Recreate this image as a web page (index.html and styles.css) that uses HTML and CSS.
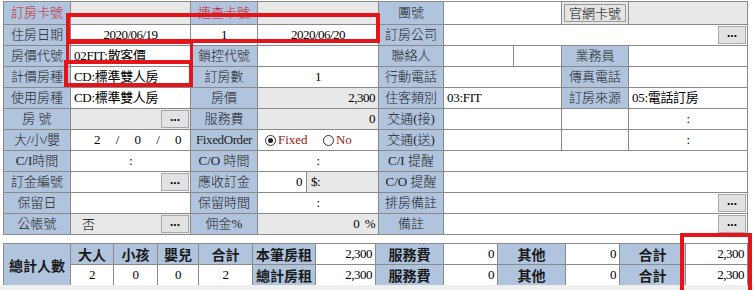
FILE: index.html
```html
<!DOCTYPE html>
<html lang="zh-Hant">
<head>
    <meta charset="UTF-8">
    <title>訂房資料</title>
    <link rel="stylesheet" href="styles.css">
</head>
<body>
<div class="page">
    <table class="grid main">
        <colgroup>
            <col style="width:67px"><col style="width:120px"><col style="width:67px"><col style="width:121px">
            <col style="width:65px"><col style="width:118px"><col style="width:67px"><col style="width:119px">
        </colgroup>
        <tr>
            <td class="lbl red">訂房卡號</td>
            <td class="gray"></td>
            <td class="lbl red">連查卡號</td>
            <td class="gray"></td>
            <td class="lbl">團號</td>
            <td></td>
            <td class="web"><span class="webbtn">官網卡號</span></td>
            <td class="gray"></td>
        </tr>
        <tr>
            <td class="lbl">住房日期</td>
            <td class="c num">2020/06/19</td>
            <td class="c num">1</td>
            <td class="c num">2020/06/20</td>
            <td class="lbl">訂房公司</td>
            <td colspan="3"><div class="withbtn"><span></span><span class="dots">...</span></div></td>
        </tr>
        <tr>
            <td class="lbl">房價代號</td>
            <td class="val">02FIT:散客價</td>
            <td class="lbl">鎖控代號</td>
            <td></td>
            <td class="lbl">聯絡人</td>
            <td class="split"><div class="parts"><span class="part first"></span><span class="part"></span></div></td>
            <td class="lbl">業務員</td>
            <td></td>
        </tr>
        <tr>
            <td class="lbl">計價房種</td>
            <td class="val">CD:標準雙人房</td>
            <td class="lbl">訂房數</td>
            <td class="c num">1</td>
            <td class="lbl">行動電話</td>
            <td></td>
            <td class="lbl">傳真電話</td>
            <td></td>
        </tr>
        <tr>
            <td class="lbl">使用房種</td>
            <td class="val">CD:標準雙人房</td>
            <td class="lbl">房價</td>
            <td class="gray r num">2,300</td>
            <td class="lbl">住客類別</td>
            <td class="val">03:FIT</td>
            <td class="lbl">訂房來源</td>
            <td class="val">05:電話訂房</td>
        </tr>
        <tr>
            <td class="lbl">房 號</td>
            <td class="gray"><div class="withbtn"><span></span><span class="dots">...</span></div></td>
            <td class="lbl">服務費</td>
            <td class="gray r num">0</td>
            <td class="lbl">交通(接)</td>
            <td></td>
            <td></td>
            <td class="c num">:</td>
        </tr>
        <tr>
            <td class="lbl">大/小/嬰</td>
            <td class="num"><div class="guests"><span>2</span><span>/</span><span>0</span><span>/</span><span>0</span></div></td>
            <td class="lbl num">FixedOrder</td>
            <td class="radios">
                <span class="radio on"></span><span class="rtext">Fixed</span>
                <span class="radio"></span><span class="rtext">No</span>
            </td>
            <td class="lbl">交通(送)</td>
            <td></td>
            <td></td>
            <td class="c num">:</td>
        </tr>
        <tr>
            <td class="lbl">C/I時間</td>
            <td class="c num">:</td>
            <td class="lbl">C/O 時間</td>
            <td class="c num">:</td>
            <td class="lbl">C/I 提醒</td>
            <td colspan="3"></td>
        </tr>
        <tr>
            <td class="lbl">訂金編號</td>
            <td><div class="withbtn"><span></span><span class="dots">...</span></div></td>
            <td class="lbl">應收訂金</td>
            <td class="split"><div class="parts"><span class="part deposit num">0</span><span class="part gray num">$:</span></div></td>
            <td class="lbl">C/O 提醒</td>
            <td colspan="3"></td>
        </tr>
        <tr>
            <td class="lbl">保留日</td>
            <td></td>
            <td class="lbl">保留時間</td>
            <td class="c num">:</td>
            <td class="lbl">排房備註</td>
            <td colspan="3"><div class="withbtn"><span></span><span class="dots">...</span></div></td>
        </tr>
        <tr>
            <td class="lbl">公帳號</td>
            <td class="gray"><div class="withbtn"><span class="no">否</span><span class="dots">...</span></div></td>
            <td class="lbl">佣金%</td>
            <td class="gray r num">0 &nbsp;%</td>
            <td class="lbl">備註</td>
            <td colspan="3"><div class="withbtn"><span></span><span class="dots">...</span></div></td>
        </tr>
    </table>

    <table class="grid totals">
        <colgroup>
            <col style="width:67px"><col style="width:43px"><col style="width:44px"><col style="width:41px">
            <col style="width:54px"><col style="width:63px"><col style="width:60px"><col style="width:68px">
            <col style="width:54px"><col style="width:68px"><col style="width:54px"><col style="width:66px">
            <col style="width:62px">
        </colgroup>
        <tr>
            <td class="lbl" rowspan="2">總計人數</td>
            <td class="lbl">大人</td>
            <td class="lbl">小孩</td>
            <td class="lbl">嬰兒</td>
            <td class="lbl">合計</td>
            <td class="lbl">本筆房租</td>
            <td class="r num">2,300</td>
            <td class="lbl">服務費</td>
            <td class="r num">0</td>
            <td class="lbl">其他</td>
            <td class="r num">0</td>
            <td class="lbl">合計</td>
            <td class="r num">2,300</td>
        </tr>
        <tr>
            <td class="c num">2</td>
            <td class="c num">0</td>
            <td class="c num">0</td>
            <td class="c num">2</td>
            <td class="lbl">總計房租</td>
            <td class="r num">2,300</td>
            <td class="lbl">服務費</td>
            <td class="r num">0</td>
            <td class="lbl">其他</td>
            <td class="r num">0</td>
            <td class="lbl">合計</td>
            <td class="r num">2,300</td>
        </tr>
    </table>

    <div class="strip"></div>

    <div class="mark mark-dates"></div>
    <div class="mark mark-code"></div>
    <div class="mark mark-room"></div>
    <div class="mark mark-total"></div>
</div>
</body>
</html>
```

FILE: styles.css
```css
body {
    margin: 0;
    background-color: #fff;
    font-family: "Liberation Serif", "Noto Sans CJK TC", serif;
    font-size: 13px;
    color: #000;
}
.page {
    position: relative;
    width: 754px;
    height: 290px;
    overflow: hidden;
    padding: 1px 0 0 3px;
    box-sizing: border-box;
}
.grid {
    border-collapse: collapse;
    table-layout: fixed;
    width: 744px;
}
.grid td {
    border: 1px solid #8a8a8a;
    height: 20px;
    padding: 0 3px;
    line-height: 18px;
    white-space: nowrap;
    overflow: hidden;
    background-color: #fff;
}
.grid td.lbl {
    background-color: #b0c4de;
    text-align: center;
    font-family: "Liberation Serif", "Noto Sans CJK TC", serif;
    font-weight: 300;
    color: #222;
    padding: 0;
}
.grid td.lbl.num {
    font-weight: normal;
    letter-spacing: -0.4px;
}
.grid td.red {
    color: #c8141e;
}
.grid td.gray {
    background-color: #e8e8e8;
}
.val {
    font-family: "Liberation Serif", "Noto Sans CJK TC", serif;
    letter-spacing: -0.3px;
}
.num {
    font-family: "Liberation Serif", serif;
    letter-spacing: -0.5px;
}
.c {
    text-align: center;
}
.r {
    text-align: right;
}
.grid td.web {
    background-color: #e8e8e8;
    padding: 1px 2px;
}
.webbtn {
    display: block;
    height: 16px;
    line-height: 16px;
    border: 1px solid #9a9a9a;
    background-color: #e4e4e4;
    text-align: center;
    font-family: "Noto Sans CJK TC", sans-serif;
    font-weight: 300;
}
.withbtn {
    display: flex;
    justify-content: space-between;
    align-items: center;
}
.withbtn .no {
    padding-left: 8px;
    font-family: "Noto Sans CJK TC", sans-serif;
    font-weight: 300;
}
.dots {
    width: 26px;
    height: 16px;
    line-height: 12px;
    border: 1px solid #a8a8a8;
    background-color: #e2e2e2;
    text-align: center;
    font-family: "Liberation Sans", sans-serif;
    font-size: 12px;
    font-weight: bold;
    margin-right: -2px;
}
.grid td.split {
    padding: 0;
}
.parts {
    display: flex;
    height: 20px;
}
.part {
    flex: 1;
    line-height: 20px;
    padding: 0 4px;
}
.part.first {
    flex: 0 0 69px;
    border-right: 1px solid #8a8a8a;
    padding: 0;
}
.part.deposit {
    flex: 0 0 40px;
    text-align: right;
    border-right: 1px solid #8a8a8a;
}
.part.gray {
    background-color: #e8e8e8;
}
.guests {
    display: flex;
    justify-content: space-between;
    padding: 0 6px 0 20px;
}
.radios {
    color: #a01818;
    font-family: "Liberation Serif", serif;
}
.radio {
    display: inline-block;
    width: 11px;
    height: 11px;
    border: 1px solid #333;
    border-radius: 50%;
    vertical-align: -2px;
    margin: 0 2px 0 4px;
    box-sizing: border-box;
    position: relative;
}
.radio.on::after {
    content: "";
    position: absolute;
    left: 2px;
    top: 2px;
    width: 5px;
    height: 5px;
    border-radius: 50%;
    background-color: #222;
}
.rtext {
    margin-right: 8px;
}
.totals {
    margin-top: 8px;
}
.totals td.lbl {
    font-family: "Noto Sans CJK TC", sans-serif;
    font-weight: bold;
    font-size: 14px;
    color: #1a1a1a;
}
.totals td {
    height: 20px;
}
.strip {
    position: absolute;
    left: 0;
    right: 0;
    top: 285px;
    height: 5px;
    background-color: #efefef;
}
.mark {
    position: absolute;
    border: 4px solid #e4141b;
    box-sizing: border-box;
}
.mark-dates {
    left: 66px;
    top: 13px;
    width: 314px;
    height: 30px;
}
.mark-code {
    left: 66px;
    top: 41px;
    width: 127px;
    height: 22px;
    border-width: 3px;
}
.mark-room {
    left: 64px;
    top: 60px;
    width: 129px;
    height: 27px;
}
.mark-total {
    left: 680px;
    top: 233px;
    width: 72px;
    height: 62px;
}
```
